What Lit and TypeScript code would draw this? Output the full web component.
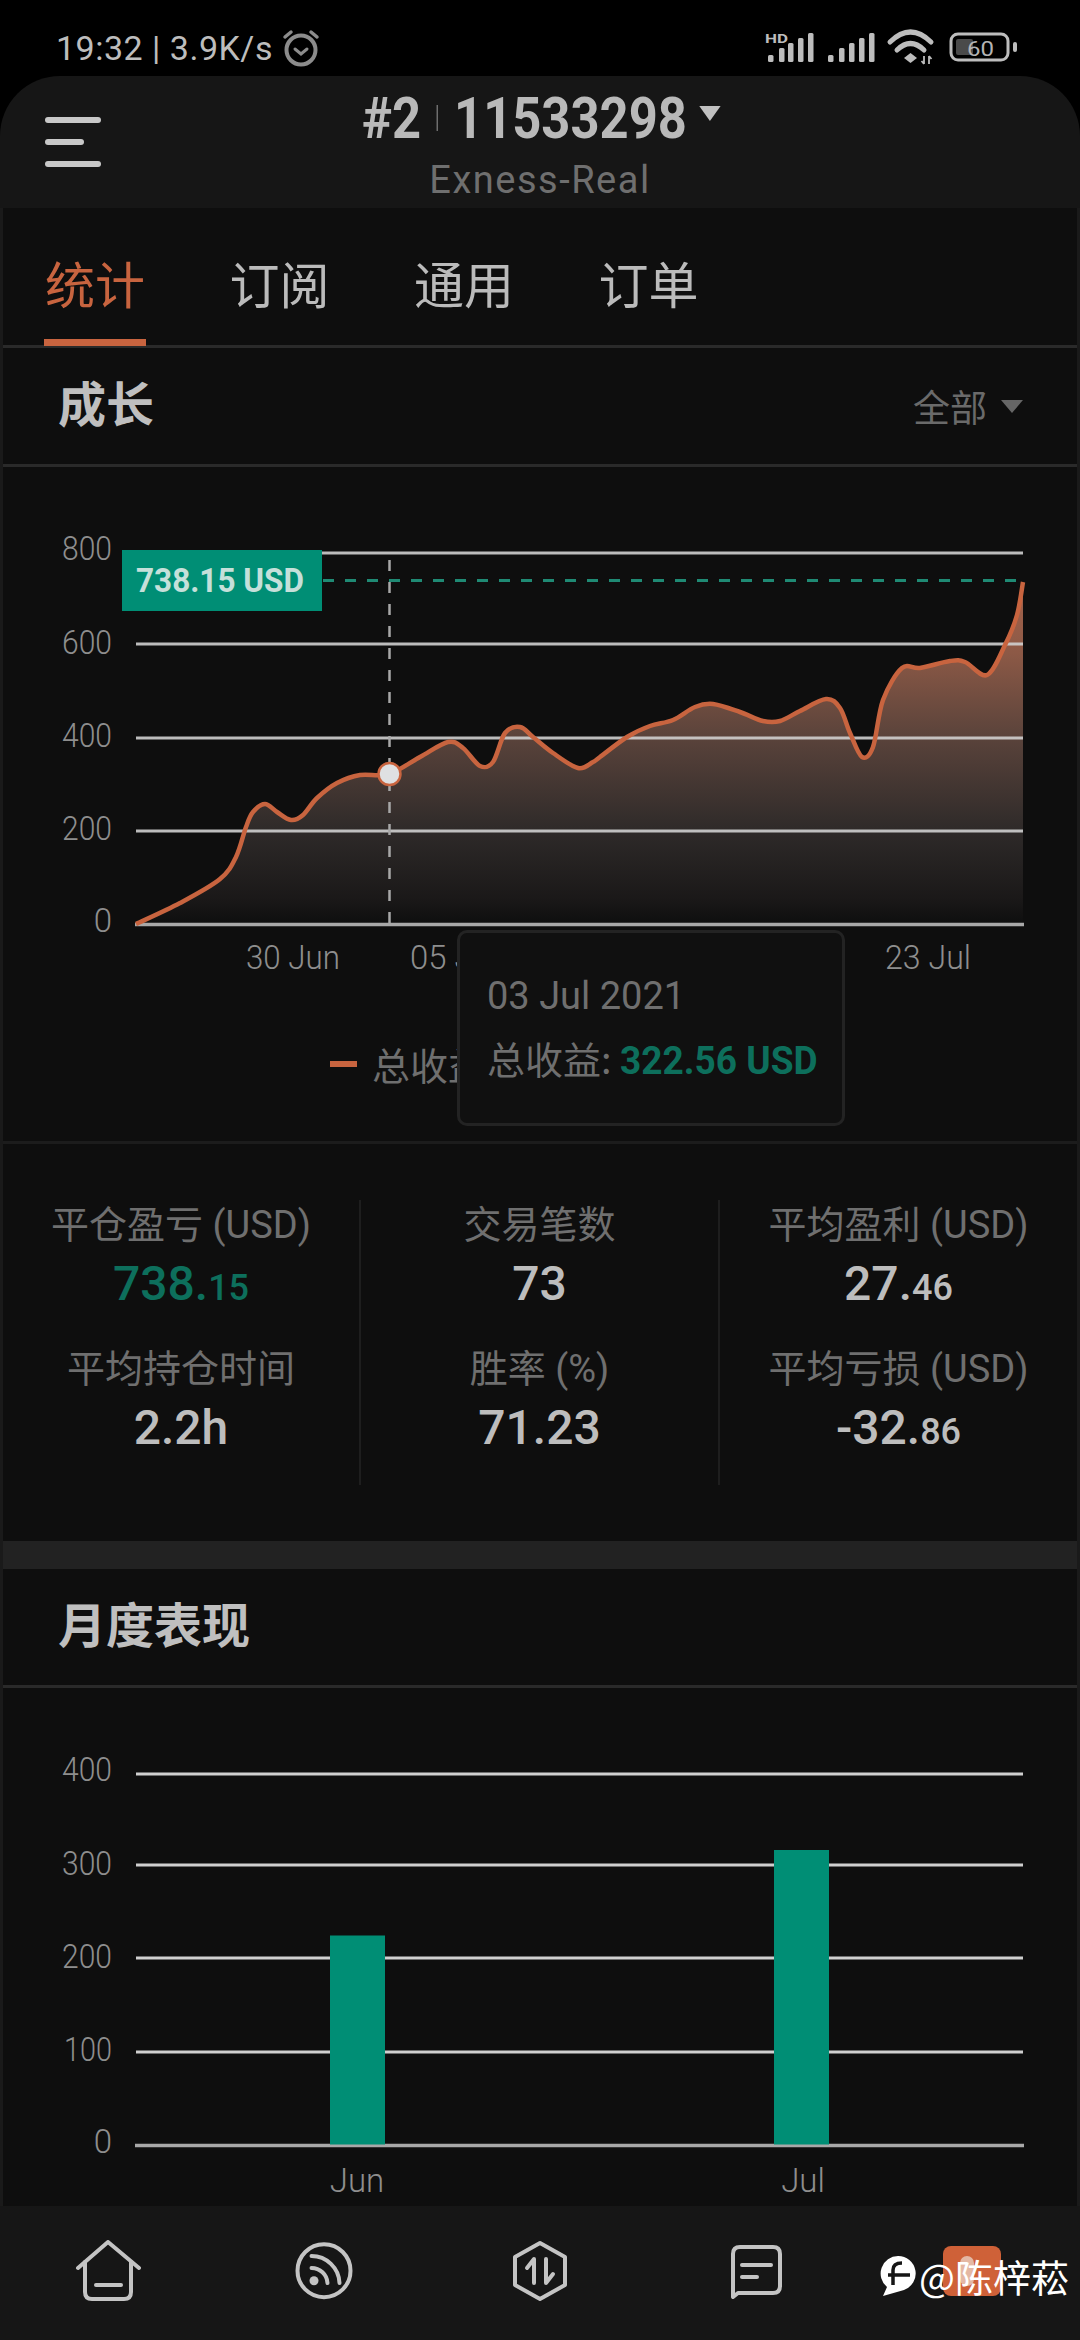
import { LitElement, html, css, svg } from "lit";
import { customElement } from "lit/decorators.js";

type P = [number, number];
const CURVE: P[] = [
  [136,924],[180,903],[220,879],[236,857],[246,827],[253,812],[265,804],[277,812],[291,820],[303,815],[317,798],
  [337,783],[360,775],[389,774],[420,757],[448,742],[463,748],[480,766],[493,762],[505,733],[520,727],[533,737],
  [553,753],[578,768],[593,762],[600,757],[627,737],[650,726],[673,720],[695,707],[713,704],[740,712],[763,721],
  [780,721],[800,711],[826,699],[840,708],[850,733],[862,757],[873,747],[883,700],[902,668],[920,668],[950,661],
  [965,662],[987,675],[1005,645],[1017,615],[1023,582],
];

function spline(pts: P[]): string {
  let d = `M${pts[0][0]} ${pts[0][1]}`;
  for (let i = 0; i < pts.length - 1; i++) {
    const p0 = pts[Math.max(0, i - 1)], p1 = pts[i], p2 = pts[i + 1], p3 = pts[Math.min(pts.length - 1, i + 2)];
    const c1x = p1[0] + (p2[0] - p0[0]) / 6, c1y = p1[1] + (p2[1] - p0[1]) / 6;
    const c2x = p2[0] - (p3[0] - p1[0]) / 6, c2y = p2[1] - (p3[1] - p1[1]) / 6;
    d += `C${c1x.toFixed(1)} ${c1y.toFixed(1)} ${c2x.toFixed(1)} ${c2y.toFixed(1)} ${p2[0]} ${p2[1]}`;
  }
  return d;
}
const LINE = spline(CURVE);
const AREA = `${LINE}L1023 924L136 924Z`;

const STATS = [
  [
    { l: "平仓盈亏 (USD)", v: "738.", s: "15", g: true },
    { l: "平均持仓时间", v: "2.2h", s: "" },
  ],
  [
    { l: "交易笔数", v: "73", s: "" },
    { l: "胜率 (%)", v: "71.23", s: "" },
  ],
  [
    { l: "平均盈利 (USD)", v: "27.", s: "46" },
    { l: "平均亏损 (USD)", v: "-32.", s: "86" },
  ],
];

@customElement("app-root")
export class AppRoot extends LitElement {
  static styles = css`
    :host {
      display: block; width: 1080px; height: 2340px; overflow: hidden; background: #000;
      font-family: Roboto, "Noto Sans CJK SC", sans-serif;
      --cjk: "Noto Sans CJK SC", sans-serif;
    }
    * { box-sizing: border-box; }
    .page { display: flex; flex-direction: column; height: 2340px; }
    .status { height: 76px; flex: none; display: flex; justify-content: space-between; position: relative; }
    .status-left { display: flex; align-items: center; gap: 9px; padding: 19px 0 0 56px; color: #bdbdbd; font: 400 34px Roboto, sans-serif; height: 76px; letter-spacing: .5px; }
    .status svg { display: block; }
    .status svg.icons { position: absolute; left: 0; top: 0; }
    .header { height: 132px; flex: none; background: #161616; border-radius: 60px 60px 0 0; display: flex; position: relative; flex-direction: column; align-items: center; }
    .burger { position: absolute; left: 45px; top: 41px; width: 56px; display: flex; flex-direction: column; gap: 16px; }
    .burger i { display: block; height: 6px; border-radius: 3px; background: #c8c8c8; }
    .burger i:nth-child(2) { width: 39px; }
    .title { display: flex; align-items: center; margin-top: 12px; height: 60px; color: #b9b9b9; font-weight: 700; font-size: 57px; padding-left: 4px; transform: scaleX(.89); }
    .title .sep { width: 1px; height: 26px; background: #aaa; margin: 0 18px; }
    .title .caret { width: 0; height: 0; border-left: 12px solid transparent; border-right: 12px solid transparent; border-top: 15px solid #c0c0c0; margin: -10px 0 0 14px; }
    .server { color: #6f6f6f; font-size: 38px; line-height: 44px; margin-top: 10px; letter-spacing: 1.500px; }
    .body { flex: 1; min-height: 0; background: #0e0e0e; border-left: 3px solid #1a1a1a; border-right: 3px solid #1a1a1a; display: flex; flex-direction: column; margin: 0; }
    .tabs { height: 140px; flex: none; border-bottom: 3px solid #2a2a2a; display: flex; gap: 84.500px; padding-left: 42px; font: 400 50px var(--cjk); color: #bbb; align-items: stretch; }
    .tab { padding-top: 43px; line-height: 62px; position: relative; }
    .tab.on { color: #c8643f; }
    .tab.on::after { content: ""; position: absolute; left: -1px; right: -1px; bottom: -1px; height: 7px; background: #c8643f; }
    .sec-head { height: 119px; flex: none; border-bottom: 3px solid #2a2a2a; display: flex; align-items: center; justify-content: space-between; padding: 0 55px 10px; }
    .sec-head h2 { margin: 0; font: 700 48px var(--cjk); color: #bfbfbf; }
    .sec-head .all { display: flex; align-items: center; gap: 14px; font: 400 37px var(--cjk); color: #6a6a6a; margin: 10px 1px 0 auto; }
    .sec-head .all i { width: 0; height: 0; border-left: 11px solid transparent; border-right: 11px solid transparent; border-top: 13px solid #666; margin-right: -2px; }
    .growth { height: 677px; flex: none; position: relative; border-bottom: 3px solid #1c1c1c; }
    .spacer { height: 53px; }
    .chart { display: block; margin-left: -3px; width: 1080px; }
    .axis { font-size: 33px; font-weight: 300; fill: #8e8e8e; }
    .legend { display: flex; align-items: center; gap: 15px; padding-left: 327px; margin-top: 46px; color: #6f6f6f; font: 400 38px var(--cjk); }
    .legend i { width: 27px; height: 6px; background: #c8643f; }
    .tooltip { position: absolute; left: 454px; top: 463px; width: 388px; height: 196px; background: #101010; border: 3px solid #232323; border-radius: 10px; padding: 38px 0 0 27px; color: #6f6f6f; }
    .tooltip .d { font-size: 38px; line-height: 50px; }
    .tooltip .r { display: flex; align-items: baseline; margin-top: 12px; gap: 8px; font: 400 38px var(--cjk); line-height: 50px; }
    .tooltip b { font: 700 38px Roboto, sans-serif; color: #0d6f5c; transform: scaleX(.975); transform-origin: left; }
    .stats { height: 397px; flex: none; display: grid; grid-template-columns: 358px 359px 357px; padding-top: 56px; }
    .col { height: 285px; display: grid; grid-template-rows: 144px 144px; border-right: 2px solid #1e1e1e; }
    .col:last-child { border-right: 0; }
    .stat { display: flex; flex-direction: column; align-items: center; }
    .stat .l { color: #6f6f6f; font-size: 38px; line-height: 50px; white-space: nowrap; }
    .stat .v { color: #bdbdbd; font-size: 48px; font-weight: 500; line-height: 66px; margin-top: 1px; white-space: nowrap; }
    .stat .v small { font-size: 36px; font-weight: 500; }
    .stat .v.g { color: #0d6f5c; }
    .gap { height: 28px; flex: none; background: #222; }
    .monthly { flex: 1; min-height: 0; }
    .nav { height: 134px; flex: none; background: #161616; display: grid; grid-template-columns: repeat(5, 216px); position: relative; }
    .nav .cell { display: flex; justify-content: center; padding-top: 34px; }
    .nav svg { display: block; }
    .nav svg.chat { margin-top: 2px; }
    .badge { width: 58px; height: 50px; border-radius: 8px; background: #cf6138; margin-top: 6px; display: flex; align-items: center; justify-content: center; }
    .badge i { display: block; width: 14px; height: 30px; border-radius: 7px; background: #e4b8a4; margin-left: -10px; }
    .mark { position: absolute; left: 880px; top: 48px; display: flex; align-items: center; gap: 3px; color: #fff; font: 400 38px var(--cjk); line-height: 44px; }
  `;

  private statusIcons() {
    const tops = [55, 48, 43, 38, 33];
    const bars = (xs: number[]) => xs.map((x, i) => svg`<rect x=${x} y=${tops[i]} width="5.500" height=${62 - tops[i]} rx="1.500" fill="#bdbdbd"/>`);
    return html`<svg class="icons" width="1080" height="76" viewBox="0 0 1080 76">
      ${bars([768, 779, 788, 798, 808])}
      <text x="765" y="42.500" font-family="Roboto" font-weight="700" font-size="13" fill="#bdbdbd" textLength="23" lengthAdjust="spacingAndGlyphs">HD</text>
      ${bars([828, 839, 849, 859, 869])}
      <g fill="none" stroke="#bdbdbd" stroke-width="5" stroke-linecap="round">
        <path d="M890 42Q910.500 22 931 42"/><path d="M897 50Q910.500 37 924 50"/>
      </g>
      <path d="M904 58L910.500 53L917 58L910.500 63Z" fill="#bdbdbd"/>
      <path d="M924 56v8M921.500 61l2.500 3M929 56v8M929 56l2.500 3" stroke="#bdbdbd" stroke-width="1.800" fill="none"/>
      <rect x="951" y="34" width="57" height="26" rx="7" fill="none" stroke="#bdbdbd" stroke-width="3"/>
      <rect x="956" y="39" width="17" height="16" rx="2" fill="#4a4a4a"/>
      <rect x="1013" y="42" width="4" height="10" rx="2" fill="#bdbdbd"/>
      <text x="967" y="55.500" font-family="Roboto" font-size="20" fill="#b4b4b4" textLength="27" lengthAdjust="spacingAndGlyphs">60</text>
    </svg>`;
  }

  private growth() {
    const ys = [553, 644, 738, 831];
    const labels: [string, number, number | null][] = [["800", 560, 50], ["600", 654, 50], ["400", 747, 50], ["200", 840, 50], ["0", 932, null]];
    return html`<svg class="chart" width="1080" height="470" viewBox="0 520 1080 470">
      <defs>
        <linearGradient id="af" gradientUnits="userSpaceOnUse" x1="0" y1="582" x2="0" y2="924">
          <stop offset="0" stop-color="#a8644c"/>
          <stop offset=".208" stop-color="#8c5946"/>
          <stop offset=".453" stop-color="#5a433b"/>
          <stop offset=".728" stop-color="#2e2a29"/>
          <stop offset=".93" stop-color="#1a1818"/>
          <stop offset="1" stop-color="#0e0e0e"/>
        </linearGradient>
      </defs>
      <path d=${AREA} fill="url(#af)"/>
      ${ys.map((y) => svg`<line x1="136" x2="1023" y1=${y} y2=${y} stroke="#cfcfcf" stroke-opacity=".9" stroke-width="3"/>`)}
      <line x1="135" x2="1024" y1="924.500" y2="924.500" stroke="#a8a8a8" stroke-width="3.500"/>
      <path d=${LINE} fill="none" stroke="#c8643f" stroke-width="4.500" stroke-linejoin="round"/>
      <line x1="389.500" x2="389.500" y1="560" y2="924" stroke="#a8a8a8" stroke-width="2.500" stroke-dasharray="11 11"/>
      <line x1="322" x2="1023" y1="580.500" y2="580.500" stroke="#1f8a74" stroke-width="3" stroke-dasharray="11 11" stroke-dashoffset="-1"/>
      <rect x="122" y="550" width="200" height="61" fill="#008e75"/>
      <text x="136" y="592" font-size="34" font-weight="700" fill="#c5e0da" font-family="Roboto" textLength="168" lengthAdjust="spacingAndGlyphs">738.15 USD</text>
      <circle cx="389.500" cy="774" r="11" fill="#dfe0e2" stroke="#c8643f" stroke-width="2.500"/>
      ${labels.map(([t, y, w]) => w
        ? svg`<text class="axis" x="62" y=${y} textLength=${w} lengthAdjust="spacingAndGlyphs">${t}</text>`
        : svg`<text class="axis" x="112" y=${y} text-anchor="end">${t}</text>`)}
      <text class="axis" x="246" y="969" textLength="94" lengthAdjust="spacingAndGlyphs">30 Jun</text>
      <text class="axis" x="410" y="969" textLength="88" lengthAdjust="spacingAndGlyphs">05 Jul</text>
      <text class="axis" x="885" y="969" textLength="86" lengthAdjust="spacingAndGlyphs">23 Jul</text>
    </svg>`;
  }

  private monthly() {
    const ys = [1774, 1865, 1958, 2052];
    const labels: [string, number, number | null][] = [["400", 1781, 50], ["300", 1875, 50], ["200", 1968, 50], ["100", 2061, 48], ["0", 2153, null]];
    return html`<svg class="chart" width="1080" height="518" viewBox="0 1688 1080 518">
      ${ys.map((y) => svg`<line x1="136" x2="1023" y1=${y} y2=${y} stroke="#cfcfcf" stroke-width="3"/>`)}
      <line x1="135" x2="1024" y1="2145.500" y2="2145.500" stroke="#a8a8a8" stroke-width="3.500"/>
      <rect x="330" y="1935.500" width="55" height="209" fill="#008e75"/>
      <rect x="774" y="1850" width="55" height="294.500" fill="#008e75"/>
      ${labels.map(([t, y, w]) => w
        ? svg`<text class="axis" x=${112 - w} y=${y} textLength=${w} lengthAdjust="spacingAndGlyphs">${t}</text>`
        : svg`<text class="axis" x="112" y=${y} text-anchor="end">${t}</text>`)}
      <text class="axis" x="357" y="2192" text-anchor="middle">Jun</text>
      <text class="axis" x="803" y="2192" text-anchor="middle">Jul</text>
    </svg>`;
  }

  render() {
    return html`<div class="page">
      <div class="status">
        <div class="status-left"><span>19:32 | 3.9K/s</span>
          <svg width="38" height="38" viewBox="0 0 38 38" fill="none" stroke="#8c8c8c" stroke-linecap="round">
            <circle cx="19" cy="21" r="14.500" stroke-width="4"/>
            <path d="M3 8L9 3M35 8L29 3" stroke-width="3.500"/>
            <path d="M13 20L19 25L25 20" stroke-width="3"/>
          </svg>
        </div>
        ${this.statusIcons()}
      </div>
      <div class="header">
        <div class="burger"><i></i><i></i><i></i></div>
        <div class="title"><span>#2</span><span class="sep"></span><span>11533298</span><span class="caret"></span></div>
        <div class="server">Exness-Real</div>
      </div>
      <div class="body">
        <div class="tabs">
          <div class="tab on">统计</div><div class="tab">订阅</div><div class="tab">通用</div><div class="tab">订单</div>
        </div>
        <div class="sec-head"><h2>成长</h2><div class="all">全部<i></i></div></div>
        <div class="growth">
          <div class="spacer"></div>
          ${this.growth()}
          <div class="legend"><i></i><span>总收益</span></div>
          <div class="tooltip">
            <div class="d">03 Jul 2021</div>
            <div class="r"><span>总收益:</span><b>322.56 USD</b></div>
          </div>
        </div>
        <div class="stats">
          ${STATS.map((c) => html`<div class="col">${c.map((s: any) => html`<div class="stat">
            <div class="l">${s.l}</div>
            <div class="v ${s.g ? "g" : ""}">${s.v}<small>${s.s}</small></div>
          </div>`)}</div>`)}
        </div>
        <div class="gap"></div>
        <div class="sec-head"><h2>月度表现</h2></div>
        <div class="monthly">${this.monthly()}</div>
      </div>
      <div class="nav">
        <div class="cell"><svg width="66" height="64" viewBox="0 0 66 64" fill="none" stroke="#c4c4c4" stroke-width="4" stroke-linecap="round" stroke-linejoin="round">
          <path d="M3 28L33 2L64 28"/><path d="M10 22V52Q10 59 17 59H49Q56 59 56 52V22"/><path d="M21 45H46"/></svg></div>
        <div class="cell"><svg width="60" height="62" viewBox="0 0 60 62" fill="none" stroke="#c4c4c4" stroke-width="4" stroke-linecap="round">
          <circle cx="30" cy="30.700" r="26.500"/><circle cx="20" cy="40.700" r="4.500" fill="#c4c4c4" stroke="none"/>
          <path d="M17.500 28A16 16 0 0 1 33.500 43"/><path d="M17.500 16A28 28 0 0 1 45.500 43"/></svg></div>
        <div class="cell"><svg width="60" height="64" viewBox="0 0 60 64" fill="none" stroke="#c4c4c4" stroke-width="4" stroke-linecap="round" stroke-linejoin="round">
          <path d="M30 3L55 17V45L30 59L5 45V17Z"/><path d="M24 43V19L17 28"/><path d="M36 19V43L43 34"/></svg></div>
        <div class="cell"><svg class="chat" width="56" height="58" viewBox="0 0 56 58" fill="none" stroke="#c4c4c4" stroke-width="4" stroke-linecap="round" stroke-linejoin="round">
          <path d="M5 55V12Q5 5 12 5H45Q52 5 52 12V44Q52 51 45 51H10Z"/><path d="M14 23H43"/><path d="M14 35H29"/></svg></div>
        <div class="cell"><div class="badge"><i></i></div></div>
        <div class="mark">
          <svg width="36" height="42" viewBox="0 0 36 42">
            <path d="M18 1A17.500 17.500 0 0 1 24 35L3 41L7 32A17.500 17.500 0 0 1 18 1Z" fill="#fff"/>
            <path d="M13 30V15Q13 8 22 8M8 20H30" fill="none" stroke="#161616" stroke-width="3.500"/>
          </svg>
          <span>@陈梓菘</span>
        </div>
      </div>
    </div>`;
  }
}
